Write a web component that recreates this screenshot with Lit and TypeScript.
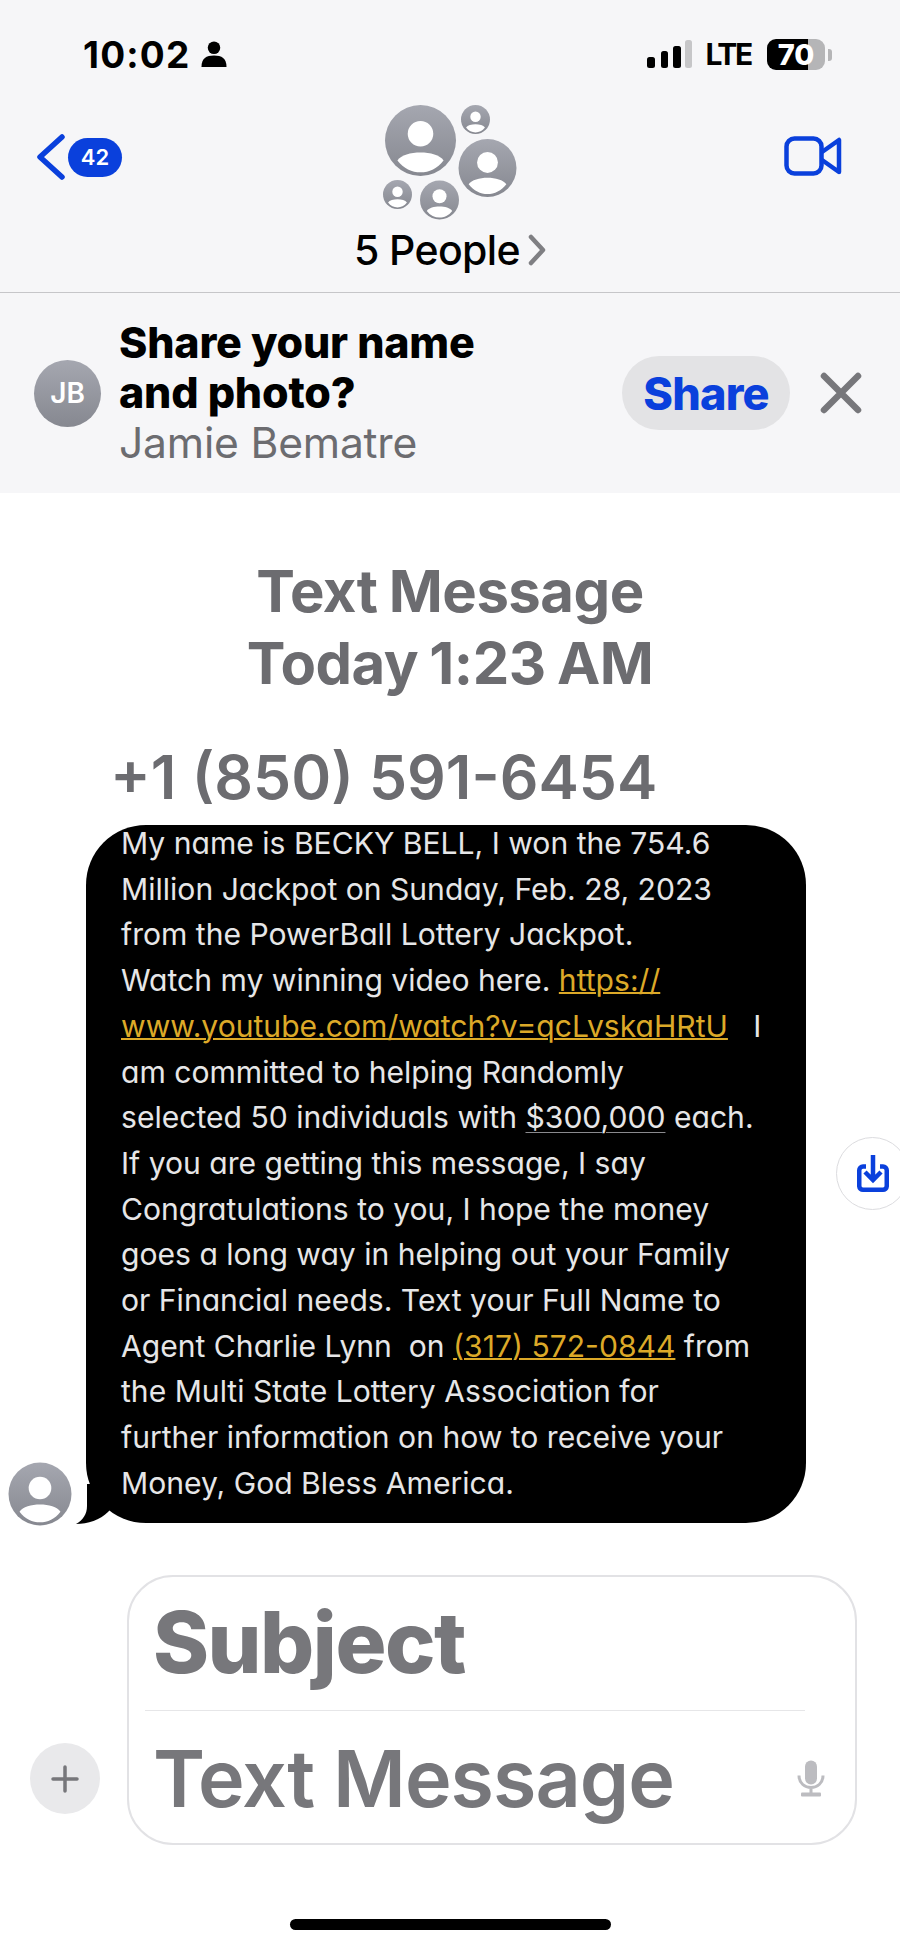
import { LitElement, css, html, svg } from "lit";
import { customElement } from "lit/decorators.js";

const person = (cx: number, cy: number, r: number) => svg`
  <circle cx=${cx} cy=${cy} r=${r} fill="url(#av)"/>
  <circle cx=${cx} cy=${cy - r * 0.19} r=${r * 0.36} fill="#fff"/>
  <path d="M${cx - r * 0.65} ${cy + r * 0.56}c${r * 0.2} ${-r * 0.3} ${r * 1.1} ${-r * 0.3} ${r * 1.3} 0c${-r * 0.34} ${r * 0.45} ${-r * 0.96} ${r * 0.45} ${-r * 1.3} 0z" fill="#fff"/>
`;

const grad = svg`<defs><linearGradient id="av" x1="0" y1="0" x2="0" y2="1"><stop offset="0" stop-color="#a5a7b0"/><stop offset="1" stop-color="#868890"/></linearGradient></defs>`;

@customElement("app-root")
export class AppRoot extends LitElement {
  static styles = css`
    :host {
      display: block;
      width: 900px;
      height: 1947px;
      background: #fff;
      font-family: Inter, "Liberation Sans", sans-serif;
      color: #000;
      overflow: hidden;
      position: relative;
    }
    .top {
      background: #f6f6f8;
      height: 292px;
      border-bottom: 1px solid #c6c6c9;
      display: flex;
      flex-direction: column;
    }
    .status {
      display: flex;
      justify-content: space-between;
      align-items: center;
      padding: 36px 75px 0 83px;
      height: 36px;
    }
    .time {
      font-size: 37px;
      font-weight: 700;
      letter-spacing: 1.2px;
      display: flex;
      align-items: center;
      gap: 10px;
    }
    .right {
      display: flex;
      align-items: center;
      gap: 15px;
    }
    .lte {
      font-size: 30px;
      font-weight: 700;
      letter-spacing: -2.3px;
      margin-left: -3px;
      margin-right: 1px;
    }
    .batt {
      position: relative;
      width: 58px;
      height: 31px;
      border-radius: 9px;
      background: linear-gradient(90deg, #000 0 71%, #b5b5b7 71%);
      color: #fff;
      font-size: 29px;
      font-weight: 800;
      line-height: 31px;
      text-align: center;
    }
    .batt::after {
      content: "";
      position: absolute;
      right: -7px;
      top: 10px;
      width: 4px;
      height: 12px;
      border-radius: 0 3px 3px 0;
      background: #b5b5b7;
    }
    .nav {
      display: grid;
      grid-template-columns: 1fr auto 1fr;
      align-items: start;
      padding: 33px 36px 0 36px;
    }
    .back {
      display: flex;
      align-items: center;
      gap: 2px;
      margin-top: 29px;
    }
    .count {
      background: #0a40dc;
      color: #fff;
      font-size: 22px;
      font-weight: 600;
      width: 54px;
      height: 39px;
      border-radius: 20px;
      display: flex;
      align-items: center;
      justify-content: center;
    }
    .center {
      display: flex;
      flex-direction: column;
      align-items: center;
    }
    .people {
      font-size: 41px;
      font-weight: 500;
      letter-spacing: -0.6px;
      display: flex;
      align-items: center;
      gap: 8px;
    }
    .video {
      justify-self: end;
      margin: 31px 22px 0 0;
    }
    .banner {
      background: #f6f6f8;
      height: 200px;
      display: flex;
      align-items: center;
      padding: 0 38px 0 34px;
    }
    .jb {
      width: 67px;
      height: 67px;
      border-radius: 50%;
      background: linear-gradient(#a5a7b0, #868890);
      color: #fff;
      font-size: 28px;
      font-weight: 600;
      display: flex;
      align-items: center;
      justify-content: center;
      flex: none;
      margin-right: 18px;
    }
    .ask {
      flex: 1;
    }
    .ask b {
      display: block;
      font-size: 43px;
      line-height: 50px;
      font-weight: 800;
      letter-spacing: -0.2px;
    }
    .ask span {
      display: block;
      font-size: 42.6px;
      line-height: 52px;
      color: #6c6c70;
      letter-spacing: -0.2px;
    }
    .share {
      width: 168px;
      height: 74px;
      border-radius: 37px;
      background: #e3e3e5;
      color: #0a40dc;
      font-size: 45px;
      font-weight: 800;
      letter-spacing: -0.8px;
      display: flex;
      align-items: center;
      justify-content: center;
      margin-right: 30px;
    }
    .thread {
      position: relative;
      padding-top: 62px;
    }
    .stamp {
      text-align: center;
      font-size: 58px;
      line-height: 72px;
      font-weight: 700;
      color: #6c6c70;
      letter-spacing: -0.5px;
      word-spacing: -2px;
    }
    .sender {
      font-size: 60.6px;
      line-height: 72px;
      font-weight: 600;
      color: #6c6c70;
      margin: 42px 0 12px 110px;
    }
    .row {
      position: relative;
      margin-left: 86px;
      width: 720px;
    }
    .bubble {
      display: flow-root;
      background: #000;
      color: #e6e6e7;
      border-radius: 60px;
      padding: 0 40px 0 35px;
      height: 698px;
      box-sizing: border-box;
      font-size: 30.1px;
      line-height: 45.7px;
      font-feature-settings: "cv11";
      position: relative;
    }
    .lines {
      margin-top: -4px;
    }
    .line {
      display: block;
      white-space: pre;
    }
    .link {
      color: #dca928;
      text-decoration: underline;
      text-decoration-thickness: 2px;
    }
    .money {
      text-decoration: underline;
      text-decoration-color: #8a8a8e;
      text-decoration-thickness: 1px;
      text-underline-offset: 4px;
    }
    .tail {
      position: absolute;
      left: -12px;
      bottom: -1px;
    }
    .me {
      position: absolute;
      left: -78px;
      bottom: -3px;
    }
    .save {
      position: absolute;
      left: 836px;
      top: 1137px;
      width: 73px;
      height: 73px;
      border-radius: 50%;
      background: #fff;
      border: 1px solid #dcdcdf;
      box-sizing: border-box;
      display: flex;
      align-items: center;
      padding-left: 20px;
    }
    .composer {
      position: absolute;
      left: 30px;
      top: 1575px;
      display: flex;
      align-items: flex-end;
      gap: 27px;
    }
    .plus {
      width: 70px;
      height: 71px;
      border-radius: 50%;
      background: #e9e9eb;
      display: flex;
      align-items: center;
      justify-content: center;
      margin-bottom: 31px;
    }
    .field {
      width: 730px;
      height: 270px;
      box-sizing: border-box;
      border: 2px solid #e2e2e5;
      border-radius: 46px;
      padding: 0 0 0 24px;
      color: #77777b;
      letter-spacing: -0.5px;
    }
    .subject {
      height: 133px;
      font-size: 85px;
      line-height: 132px;
      font-weight: 800;
      letter-spacing: -1.5px;
    }
    .rule {
      height: 1px;
      width: 660px;
      background: #e6e6e8;
      margin-left: -8px;
    }
    .msg {
      display: flex;
      justify-content: space-between;
      align-items: center;
      height: 132px;
      font-size: 79px;
      font-weight: 600;
      letter-spacing: -1px;
      padding: 2px 30px 0 0;
      box-sizing: border-box;
    }
    .home {
      position: absolute;
      left: 290px;
      top: 1919px;
      width: 321px;
      height: 11px;
      border-radius: 5.5px;
      background: #000;
    }
  `;

  render() {
    return html`
      <div class="top">
        <div class="status">
          <div class="time">
            10:02
            <svg width="26" height="26" viewBox="0 0 26 27"><circle cx="13" cy="7" r="6.5"/><path d="M0 27c0-9 5-12 13-12s13 3 13 12z"/></svg>
          </div>
          <div class="right">
            <svg width="46" height="28" viewBox="0 0 46 28">
              <rect x="0" y="17" width="8" height="11" rx="2.5"/>
              <rect x="14" y="11" width="7" height="17" rx="2.5"/>
              <rect x="26" y="6" width="8" height="22" rx="2.5"/>
              <rect x="38" y="0" width="7" height="28" rx="2.5" fill="#c6c6c8"/>
            </svg>
            <span class="lte">LTE</span>
            <div class="batt">70</div>
          </div>
        </div>
        <div class="nav">
          <div class="back">
            <svg width="30" height="46" viewBox="0 0 30 46"><path d="M26 3 4 23l22 20" fill="none" stroke="#0a40dc" stroke-width="5.5" stroke-linecap="round" stroke-linejoin="round"/></svg>
            <div class="count">42</div>
          </div>
          <div class="center">
            <svg width="140" height="120" viewBox="0 0 140 120">
              ${grad}
              ${person(40.5, 35.5, 35.5)}
              ${person(95.5, 14.5, 14.5)}
              ${person(107.5, 63, 29)}
              ${person(17.5, 89.5, 14.5)}
              ${person(59.5, 95, 19.5)}
            </svg>
            <div class="people">
              5 People
              <svg width="18" height="32" viewBox="0 0 18 32"><path d="m3 3 12 13L3 29" fill="none" stroke="#7f7f83" stroke-width="4.5" stroke-linecap="round" stroke-linejoin="round"/></svg>
            </div>
          </div>
          <svg class="video" width="58" height="40" viewBox="0 0 58 40">
            <rect x="2.5" y="2.5" width="35" height="35" rx="8" fill="none" stroke="#0a40dc" stroke-width="4.5"/>
            <path d="M38 16 55 4v32L38 24" fill="none" stroke="#0a40dc" stroke-width="4.5" stroke-linejoin="round"/>
          </svg>
        </div>
      </div>

      <div class="banner">
        <div class="jb">JB</div>
        <div class="ask">
          <b>Share your name</b>
          <b>and photo?</b>
          <span>Jamie Bematre</span>
        </div>
        <div class="share">Share</div>
        <svg width="42" height="42" viewBox="0 0 42 42"><path d="m4 4 34 34M38 4 4 38" stroke="#77777b" stroke-width="6.5" stroke-linecap="round"/></svg>
      </div>

      <div class="thread">
        <div class="stamp">Text Message<br />Today 1:23 AM</div>
        <div class="sender">+1 (850) 591-6454</div>
        <div class="row">
          <svg class="tail" width="60" height="40" viewBox="0 0 60 40"><path d="M13 0V22C13 30 9 36 2 40C14 40 26 36 34 28L60 0Z"/></svg>
          <div class="bubble">
            <div class="lines">
              <span class="line">My name is BECKY BELL, I won the 754.6</span>
              <span class="line">Million Jackpot on Sunday, Feb. 28, 2023</span>
              <span class="line">from the PowerBall Lottery Jackpot.</span>
              <span class="line">Watch my winning video here. <span class="link">https://</span></span>
              <span class="line"><span class="link">www.youtube.com/watch?v=qcLvskaHRtU</span>   I</span>
              <span class="line">am committed to helping Randomly</span>
              <span class="line">selected 50 individuals with <span class="money">$300,000</span> each.</span>
              <span class="line">If you are getting this message, I say</span>
              <span class="line">Congratulations to you, I hope the money</span>
              <span class="line">goes a long way in helping out your Family</span>
              <span class="line">or Financial needs. Text your Full Name to</span>
              <span class="line">Agent Charlie Lynn  on <span class="link">(317) 572-0844</span> from</span>
              <span class="line">the Multi State Lottery Association for</span>
              <span class="line">further information on how to receive your</span>
              <span class="line">Money, God Bless America.</span>
            </div>
          </div>
          <svg class="me" width="64" height="64" viewBox="0 0 64 64">${person(32, 32, 31.5)}</svg>
        </div>
      </div>

      <div class="save">
        <svg width="32" height="37" viewBox="0 0 32 37">
          <path d="M9 11.5H6a3.75 3.75 0 0 0-3.75 3.75v16a3.75 3.75 0 0 0 3.75 3.5h20a3.75 3.75 0 0 0 3.75-3.5v-16A3.75 3.75 0 0 0 26 11.5h-3" fill="none" stroke="#0a40dc" stroke-width="4.5"/>
          <path d="M16 0v24M8 17l8 8 8-8" fill="none" stroke="#0a40dc" stroke-width="4.5"/>
        </svg>
      </div>

      <div class="composer">
        <div class="plus">
          <svg width="28" height="28" viewBox="0 0 28 28"><path d="M14 2v24M2 14h24" stroke="#77777b" stroke-width="3.5" stroke-linecap="round"/></svg>
        </div>
        <div class="field">
          <div class="subject">Subject</div>
          <div class="rule"></div>
          <div class="msg">
            Text Message
            <svg width="28" height="37" viewBox="0 0 28 36">
              <rect x="8" y="0" width="12" height="24" rx="6" fill="#bcbcc0"/>
              <path d="M2 15c0 16 24 16 24 0M14 27v6" fill="none" stroke="#bcbcc0" stroke-width="3"/>
              <rect x="4" y="32" width="20" height="4" rx="1" fill="#bcbcc0"/>
            </svg>
          </div>
        </div>
      </div>

      <div class="home"></div>
    `;
  }
}
